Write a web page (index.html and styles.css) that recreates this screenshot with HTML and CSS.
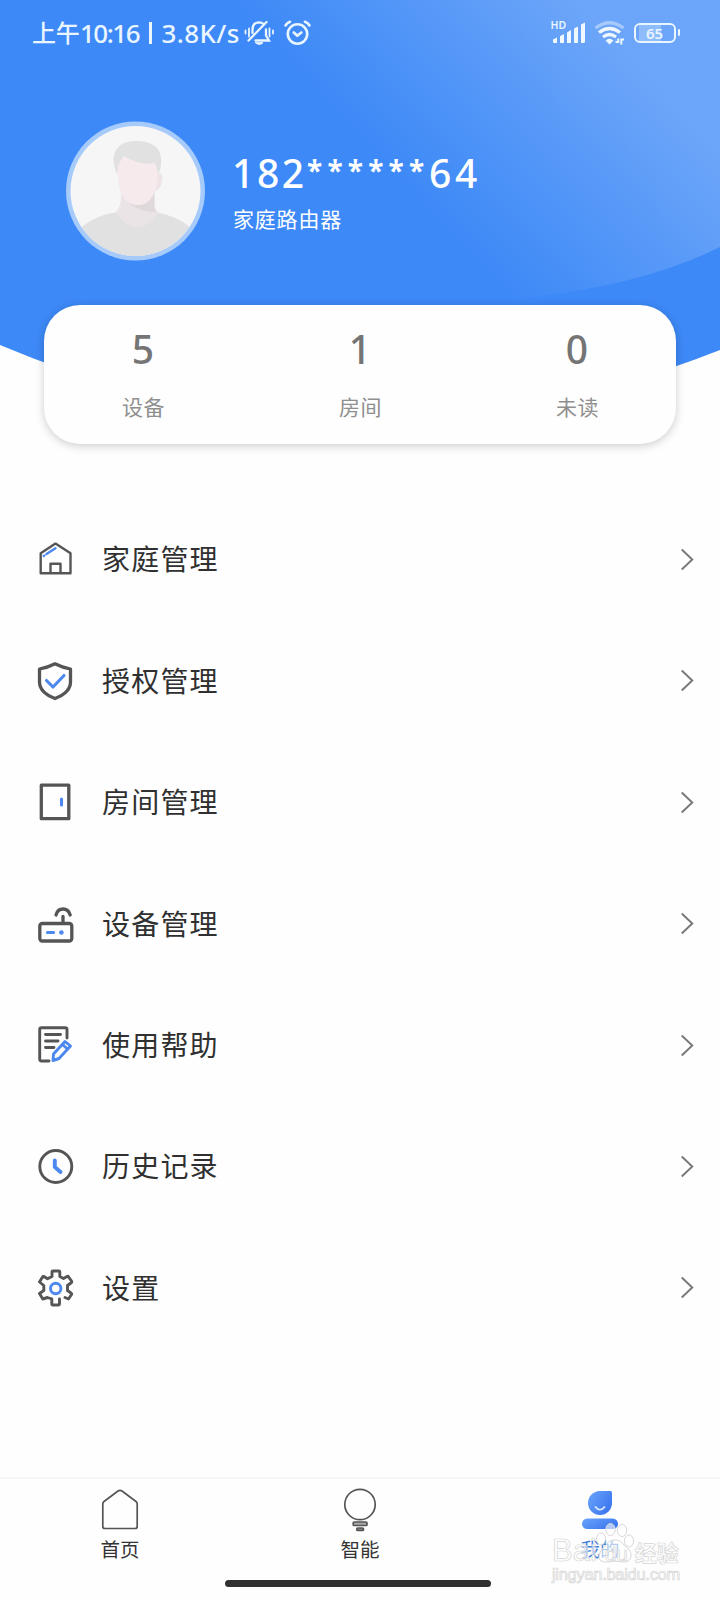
FILE: index.html
```html
<!DOCTYPE html>
<html lang="zh-CN">
<head>
<meta charset="utf-8">
<title>我的</title>
<link rel="stylesheet" href="styles.css">
</head>
<body>
<div class="app">
  <svg class="backdrop" width="720" height="440" viewBox="0 0 720 440">
    <defs>
      <linearGradient id="glow" gradientUnits="userSpaceOnUse" x1="290" y1="63" x2="473" y2="-107">
        <stop offset="0" stop-color="#fff" stop-opacity="0"/>
        <stop offset=".5" stop-color="#fff" stop-opacity=".12"/>
        <stop offset="1" stop-color="#fff" stop-opacity=".24"/>
      </linearGradient>
    </defs>
    <path d="M0 0H720V350Q540 421 360 421T0 345Z" fill="#3d89f7"/>
    <path d="M180 0H720V247Q648 283 540 296Q360 316 180 260Z" fill="url(#glow)"/>
  </svg>

  <header class="status">
    <span class="clock"><span class="ampm">上午</span><span class="time">10:16</span><span class="bar"></span><span class="speed">3.8K/s</span></span>
    <svg class="mute" width="30" height="26" viewBox="0 0 30 26" fill="none" stroke="#e9f5ff" stroke-width="2.3" stroke-linecap="round">
      <path d="M1.500 10.500v3M5 8.500v8M25.500 8.500v8M29 10.500v3" stroke-width="1.800"/>
      <path d="M8.500 13V9.500Q8.500 2.500 15 2.300 18 2.300 19.500 4M22 9.500v6l3 5H11.500M4.500 20.500L22.500 2"/>
      <path d="M11.500 22.700h7.500q-3.700 3.500-7.500 0Z" fill="#e9f5ff" stroke-width="1"/>
    </svg>
    <svg class="alarm" width="27" height="26" viewBox="0 0 27 26" fill="none" stroke="#e9f5ff" stroke-width="2.600" stroke-linecap="round" stroke-linejoin="round">
      <circle cx="13.500" cy="14" r="9.700"/><path d="M9.800 12.500l3.500 3.300 4-3.300M1.500 5.500Q3 3 6 1.800M25.500 5.500Q24 3 21 1.800"/>
    </svg>
    <span class="spacer"></span>
    <span class="cell">
      <svg width="34" height="23" viewBox="0 0 34 23" fill="#f0f8ff"><path d="M1 18.500L5 16.500V22H2Q1 22 1 21ZM8 15.200L12 13V22H8ZM15 11.500L19 9V22H15ZM22 7.500L26 5.500V22H22ZM29 3.500L33 1.500V21L32 22H29Z"/></svg>
      <span class="hd">HD</span>
    </span>
    <svg class="wifi" width="31" height="24" viewBox="0 0 31 24" fill="none" stroke="#f0f8ff" stroke-width="3.200">
      <path d="M1.500 7Q15.500-3.500 29.500 7" stroke-opacity=".45"/>
      <path d="M5 11.500Q15.500 3.500 26 11.500M9 16Q15.500 11 22 16"/>
      <path d="M11.500 19.500Q15.500 16 19.500 19.500L15.500 23.500Z" fill="#f0f8ff" stroke="none"/>
      <path d="M21.500 21h2.800v-3.500M27.300 23.500v-5H30" stroke-width="2"/>
    </svg>
    <span class="battery"><span class="cellbox">65</span><span class="tip"></span></span>
  </header>

  <section class="profile">
    <svg class="avatar" width="140" height="140" viewBox="0 0 140 140">
      <defs><clipPath id="face"><circle cx="69.500" cy="70" r="65"/></clipPath></defs>
      <circle cx="69.500" cy="70" r="69.500" fill="#a6cbfa"/>
      <g clip-path="url(#face)">
        <rect width="140" height="140" fill="#f6f6f7"/>
        <path d="M0 122Q22 94 52 91H86Q118 94 140 122V140H0Z" fill="#e1e1e1"/>
        <path d="M56 70H89V84Q89 90 93 91Q84 106 70 106Q57 104 50 91Q55 86 55 76Z" fill="#ebe4e7"/>
        <path d="M62 82Q80 86 88 70V86L90 91Q76 92 62 82Z" fill="#dfd9db"/>
        <path d="M90 53Q98 50 96 61Q94 69 89 70Z" fill="#eee3e6"/>
        <path d="M51 50Q50 33 60 33L90 40Q93 50 91 62Q87 84 72 84Q57 84 53 65Z" fill="#f6eaed"/>
        <path d="M51 53Q45 40 49 31Q54 20 70 20Q93 20 95 37Q96 46 92 54Q91 46 89 42Q74 45 58 35Q52 41 51 53Z" fill="#e1e1e1"/>
      </g>
    </svg>
    <div class="who">
      <div class="phone"><span class="head">182</span><span class="mask">******</span><span>64</span></div>
      <div class="family">家庭路由器</div>
    </div>
  </section>

  <section class="stats">
    <div class="stat"><b>5</b><span>设备</span></div>
    <div class="stat"><b>1</b><span>房间</span></div>
    <div class="stat"><b>0</b><span>未读</span></div>
  </section>

  <main class="menu">
    <div class="row">
      <svg class="icon" viewBox="0 0 40 40"><path class="ink thin" d="M5.700 14.300L20.500 4.600 35.500 14.300V34.300H5.700ZM15.500 34V24.800H25.500V34"/><path class="hue thin" d="M11.500 15L20.500 9.200M8.800 17l.5-.4"/></svg>
      <span class="name">家庭管理</span><svg class="go" viewBox="0 0 14 24"><path d="M1.500 1.500L12.500 12 1.500 22.500"/></svg>
    </div>
    <div class="row">
      <svg class="icon" viewBox="0 0 40 40"><path class="ink" d="M20 2.800Q27 6.500 35.500 8V21Q35.500 31.500 20 37.500Q4.500 31.500 4.500 21V8Q13 6.500 20 2.800Z"/><path class="hue" d="M11.500 19.500L18 26 29 14.500"/></svg>
      <span class="name">授权管理</span><svg class="go" viewBox="0 0 14 24"><path d="M1.500 1.500L12.500 12 1.500 22.500"/></svg>
    </div>
    <div class="row">
      <svg class="icon" viewBox="0 0 40 40"><rect class="ink" x="6.300" y="3.200" width="27.500" height="33.500"/><path class="hue" d="M26.500 17v6"/></svg>
      <span class="name">房间管理</span><svg class="go" viewBox="0 0 14 24"><path d="M1.500 1.500L12.500 12 1.500 22.500"/></svg>
    </div>
    <div class="row">
      <svg class="icon" viewBox="0 0 40 40"><rect class="ink" x="4.800" y="19.500" width="32" height="17.500" rx="2.500"/><path class="ink" d="M28 19V12.500M21 11Q22.500 5 28 5T35.200 11"/><path class="hue" d="M12.500 28.500h6"/><circle cx="26.400" cy="28.500" r="2.300" fill="#4c88ef"/></svg>
      <span class="name">设备管理</span><svg class="go" viewBox="0 0 14 24"><path d="M1.500 1.500L12.500 12 1.500 22.500"/></svg>
    </div>
    <div class="row">
      <svg class="icon" viewBox="0 0 40 40"><path class="ink mid" d="M14 36H6.500Q4.700 36 4.700 34V4.500Q4.700 2.700 6.500 2.700H30Q32 2.700 32 4.500V13M10.500 9.500H25.500M10.500 16H23M10.500 22.500H19"/><path class="hue mid" d="M18.500 29L30 16.500 35.500 21 24 33.500 18 35.500ZM27.500 19.500L32.500 24"/></svg>
      <span class="name">使用帮助</span><svg class="go" viewBox="0 0 14 24"><path d="M1.500 1.500L12.500 12 1.500 22.500"/></svg>
    </div>
    <div class="row">
      <svg class="icon" viewBox="0 0 40 40"><circle class="ink mid" cx="20.800" cy="20.500" r="16"/><path class="hue bold" d="M19.800 14.500V21L25.500 26"/></svg>
      <span class="name">历史记录</span><svg class="go" viewBox="0 0 14 24"><path d="M1.500 1.500L12.500 12 1.500 22.500"/></svg>
    </div>
    <div class="row">
      <svg class="icon" viewBox="0 0 40 40"><path class="ink mid" d="M16.800 31V36Q16.800 37 18 37H23.500Q24.500 37 24.500 36V31M30 29.500L33.500 31 36.500 26.500Q37 25.500 36 25L32.500 22.500V17.500L36.500 14.500Q37 14 36.500 13L33.500 8.800Q33 8 32 8.500L28.500 10.500 24.800 8.500V4Q24.800 3 23.800 3H18Q17 3 17 4V8.500L12.500 10.800 9 8.500Q8 8 7.500 9L4.500 14 8.800 17.500V22.500L4.500 25.500 7.800 31 12.500 29.500 16.800 31"/><circle class="hue mid" cx="20.700" cy="20.500" r="5.200"/></svg>
      <span class="name">设置</span><svg class="go" viewBox="0 0 14 24"><path d="M1.500 1.500L12.500 12 1.500 22.500"/></svg>
    </div>
  </main>

  <nav class="tabs">
    <div class="tab"><svg width="44" height="48" viewBox="0 0 44 48" fill="none" stroke="#555" stroke-width="1.700" stroke-linejoin="round"><path d="M6 15.500Q4.800 16.200 4.800 18V40.500Q4.800 42.500 6.800 42.500H37.200Q39.200 42.500 39.200 40.500V18Q39.200 16.200 38 15.500L24 5Q22 3.600 20 5Z"/></svg><span>首页</span></div>
    <div class="tab"><svg width="44" height="48" viewBox="0 0 44 48" fill="none" stroke="#555" stroke-width="1.700"><circle cx="22" cy="18.500" r="15.200"/><rect x="15.200" y="36" width="13.800" height="3.500" rx="1" fill="#aaa"/><rect x="18.800" y="42" width="6.700" height="2.500" rx="1" fill="#888"/></svg><span>智能</span></div>
    <div class="tab active"><svg width="44" height="48" viewBox="0 0 44 48"><defs><linearGradient id="me" x1="0" y1="0" x2="1" y2=".6"><stop stop-color="#6ba4fb"/><stop offset="1" stop-color="#3c78ef"/></linearGradient></defs><path d="M22 5H32.500Q34 5 34 6.500V17A12 12 0 1 1 22 5Z" fill="url(#me)"/><rect x="4" y="32.500" width="36" height="10.500" rx="5.200" fill="url(#me)"/><path d="M17.500 21Q22 26.500 26.500 21" fill="none" stroke="#dceaff" stroke-width="1.700" stroke-linecap="round"/></svg><span>我的</span></div>
  </nav>
  <div class="homebar"></div>

  <div class="watermark">
    <svg class="paw" width="40" height="44" viewBox="0 0 40 44" fill="#fff" fill-opacity=".6" stroke="#d8d8d8" stroke-width="1"><ellipse cx="6" cy="17" rx="4.500" ry="6"/><ellipse cx="15.500" cy="7.500" rx="4.700" ry="6"/><ellipse cx="27" cy="8.500" rx="4.700" ry="6"/><ellipse cx="34" cy="19" rx="4.500" ry="6"/><path d="M20 18Q26 18 29 23Q37 29 36 34Q35 41 27 40Q20 38 13 40Q3 41 4 33Q5 28 11 23Q14 18 20 18Z"/></svg>
    <div class="brand"><span>Bai</span><span class="du">du</span><span class="jy">经验</span></div>
    <div class="url">jingyan.baidu.com</div>
  </div>
</div>
</body>
</html>
```
FILE: styles.css
```css
* { box-sizing: border-box; }
body { margin: 0; background: #fefefe; font-family: "Noto Sans", "Noto Sans CJK SC", sans-serif; }
.app { position: relative; width: 720px; height: 1600px; overflow: hidden; display: flex; flex-direction: column; }
.backdrop { position: absolute; left: 0; top: 0; z-index: -1; }

.status { height: 65px; padding: 0 40px 0 32px; display: flex; align-items: center; color: #e9f5ff; flex: none; }
.clock { display: flex; align-items: center; width: 208px; font-size: 26px; font-weight: 500; line-height: 30px; white-space: nowrap; }
.ampm { font-size: 24px; width: 48px; letter-spacing: -.3px; }
.time { width: 60px; letter-spacing: -1.500px; }
.bar { width: 2.500px; height: 22px; margin: 0 10px 0 9px; background: #e9f5ff; }
.speed { letter-spacing: .4px; }
.mute { margin-left: 4px; }
.alarm { margin-left: 10px; }
.spacer { flex: 1; }
.cell { position: relative; width: 34px; height: 23px; margin-right: 8px; }
.hd { position: absolute; left: -1px; top: -2px; font-size: 10.500px; line-height: 12px; font-weight: 600; }
.wifi { margin-right: 9px; }
.battery { display: flex; align-items: center; gap: 2px; }
.cellbox { width: 42px; height: 20px; border: 2px solid #e9f5ff; border-radius: 6px; font-size: 15px; line-height: 16px; font-weight: 600; text-align: center; background: linear-gradient(90deg, transparent 3px, #8fbdfb 3px 25px, transparent 25px); }
.tip { width: 2.500px; height: 7px; border-radius: 2px; background: #e9f5ff; }

.profile { display: flex; height: 240px; padding: 56px 0 0 66px; flex: none; color: #fff; }
.who { margin-left: 27px; padding-top: 28px; }
.phone { display: flex; height: 48px; line-height: 48px; font-size: 39px; font-weight: 500; letter-spacing: 3.800px; }
.head { width: 75px; margin-left: -1px; letter-spacing: 2.600px; white-space: nowrap; }
.mask { width: 122px; font-size: 28px; line-height: 42px; font-weight: 700; letter-spacing: 5.200px; white-space: nowrap; }
.family { margin-top: 6px; font-size: 21px; line-height: 32px; letter-spacing: .8px; }

.stats { width: 632px; height: 139px; margin: 0 44px; padding: 0 35px; display: flex; justify-content: space-between; border-radius: 36px; background: #fefefe; box-shadow: 0 2px 10px rgba(0,0,0,.2); flex: none; }
.stat { width: 128px; padding-top: 20px; text-align: center; }
.stat b { display: block; font-size: 39px; line-height: 48px; font-weight: 500; color: #757575; }
.stat span { display: block; margin-top: 18px; padding-left: 1px; font-size: 21px; line-height: 32px; letter-spacing: .5px; color: #8f8f8f; }

.menu { padding-top: 54.800px; height: 1033px; flex: none; }
.row { display: flex; align-items: center; height: 121.400px; padding: 0 26px 0 35px; }
.icon { width: 40px; height: 40px; fill: none; stroke-linecap: round; stroke-linejoin: round; }
.ink { stroke: #555; stroke-width: 3.300; }
.hue { stroke: #4c88ef; stroke-width: 3.100; }
.thin { stroke-width: 2.400; }
.mid { stroke-width: 2.900; }
.bold { stroke-width: 3.900; }
.name { flex: 1; margin-left: 27px; font-size: 28px; line-height: 40px; letter-spacing: 1.200px; color: #303030; }
.go { width: 14px; height: 23px; fill: none; stroke: #777; stroke-width: 2; }

.tabs { height: 123px; border-top: 2px solid #f7f7f7; display: grid; grid-template-columns: repeat(3, 1fr); flex: none; }
.tab { display: flex; flex-direction: column; align-items: center; padding-top: 7px; font-size: 19.500px; line-height: 28px; color: #333; }
.tab span { margin-top: 2px; }
.active span { color: #3f7fd9; }
.homebar { position: absolute; left: 225px; top: 1580px; width: 266px; height: 7px; border-radius: 4px; background: #303030; }

.watermark { position: absolute; left: 552px; top: 1522px; width: 132px; height: 68px; color: rgba(255,255,255,.6); -webkit-text-stroke: .7px #d5d5d5; }
.paw { position: absolute; left: 43px; top: 0; }
.brand { position: relative; display: flex; align-items: baseline; padding-top: 12px; height: 42px; font: 400 31px/34px "Liberation Sans", "Noto Sans CJK SC", sans-serif; }
.du { width: 37px; margin-left: 1px; font-size: 21px; text-align: center; }
.jy { font-size: 22px; font-weight: 700; white-space: nowrap; }
.url { position: relative; font: 16.500px/20px "Liberation Sans", sans-serif; letter-spacing: -.3px; }
```
